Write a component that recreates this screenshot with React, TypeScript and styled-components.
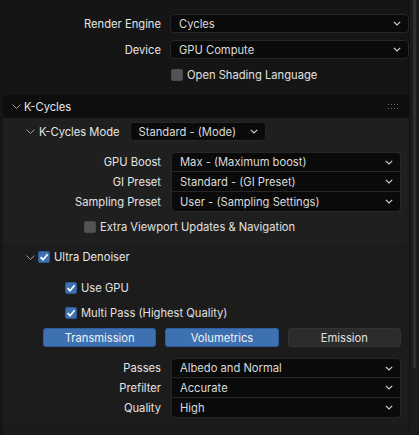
import React from 'react';
import styled, { createGlobalStyle } from 'styled-components';

const GlobalStyle = createGlobalStyle`
  html, body {
    margin: 0;
    padding: 0;
    background: #151515;
  }
  body {
    font-family: Inter, 'Noto Sans', 'DejaVu Sans', sans-serif;
    font-size: 11.2px;
    color: #e2e2e2;
  }
`;

type Pos = 'single' | 'first' | 'mid' | 'last';

const DropChevron = () => (
  <svg width='8' height='5' viewBox='0 0 8 5'>
    <path d='M0.8 0.8 L4 4 L7.2 0.8' fill='none' stroke='#cfcfcf' strokeWidth='1.2' />
  </svg>
);

const FoldChevron: React.FC<{ color?: string }> = ({ color = '#9c9c9c' }) => (
  <svg width='9' height='5' viewBox='0 0 9 5'>
    <path d='M0.5 0.5 L4.5 4.5 L8.5 0.5' fill='none' stroke={color} strokeWidth='1' />
  </svg>
);

const Tick = () => (
  <svg width='12' height='12' viewBox='0 0 12 12'>
    <path d='M2.6 6.2 L5 8.7 L9.6 3.2' fill='none' stroke='#fff' strokeWidth='1.7' />
  </svg>
);

const Grip = () => (
  <svg width='10' height='5' viewBox='0 0 10 5'>
    {[0, 3, 6, 9].map(x =>
      [0, 4].map(y => <rect key={`${x}-${y}`} x={x} y={y} width='1' height='1' fill='#6a6a6a' />)
    )}
  </svg>
);

const Select: React.FC<{ value: string; pos?: Pos }> = ({ value, pos = 'single' }) => (
  <SelectBox $pos={pos}>
    <span>{value}</span>
    <DropChevron />
  </SelectBox>
);

const Check: React.FC<{ on?: boolean; label: string; indent: number }> = ({ on, label, indent }) => (
  <CheckRow $indent={indent}>
    <CheckBox $on={!!on}>{on && <Tick />}</CheckBox>
    <span>{label}</span>
  </CheckRow>
);

const App: React.FC = () => {
  return (
    <React.Fragment>
      <GlobalStyle />
      <Frame>
        <Content>
          <TopSection>
            <PropRow $labelW={161} $gap={9}>
              <Label>Render Engine</Label>
              <Select value='Cycles' />
            </PropRow>
            <PropRow $labelW={161} $gap={9}>
              <Label>Device</Label>
              <Select value='GPU Compute' />
            </PropRow>
            <Check label='Open Shading Language' indent={171} />
          </TopSection>

          <Panel>
            <PanelHeader>
              <FoldChevron />
              <HeaderTitle>K-Cycles</HeaderTitle>
              <Grip />
            </PanelHeader>

            <PanelBody>
              <SubPanel>
                <SubHeader>
                  <FoldChevron />
                  <SubTitle>K-Cycles Mode</SubTitle>
                  <ModeSelect>
                    <Select value='Standard - (Mode)' />
                  </ModeSelect>
                </SubHeader>

                <Group>
                  <PropRow $labelW={158} $gap={10}>
                    <Label>GPU Boost</Label>
                    <Select value='Max - (Maximum boost)' pos='first' />
                  </PropRow>
                  <PropRow $labelW={158} $gap={10}>
                    <Label>GI Preset</Label>
                    <Select value='Standard - (GI Preset)' pos='mid' />
                  </PropRow>
                  <PropRow $labelW={158} $gap={10}>
                    <Label>Sampling Preset</Label>
                    <Select value='User - (Sampling Settings)' pos='last' />
                  </PropRow>
                </Group>

                <ViewportRow>
                  <Check label='Extra Viewport Updates & Navigation' indent={81} />
                </ViewportRow>
              </SubPanel>

              <SubHeader $tall>
                <FoldChevron />
                <CheckBox $on>
                  <Tick />
                </CheckBox>
                <SubTitle>Ultra Denoiser</SubTitle>
              </SubHeader>

              <DenoiseOptions>
                <Check on label='Use GPU' indent={62} />
                <Check on label='Multi Pass (Highest Quality)' indent={62} />
              </DenoiseOptions>

              <ButtonRow>
                <ToggleButton $on>Transmission</ToggleButton>
                <ToggleButton $on>Volumetrics</ToggleButton>
                <ToggleButton>Emission</ToggleButton>
              </ButtonRow>

              <Group $top={11}>
                <PropRow $labelW={158} $gap={10}>
                  <Label>Passes</Label>
                  <Select value='Albedo and Normal' pos='first' />
                </PropRow>
                <PropRow $labelW={158} $gap={10}>
                  <Label>Prefilter</Label>
                  <Select value='Accurate' pos='mid' />
                </PropRow>
                <PropRow $labelW={158} $gap={10}>
                  <Label>Quality</Label>
                  <Select value='High' pos='last' />
                </PropRow>
              </Group>

              <NextHeader>
                <FoldChevron color='#bdbdbd' />
              </NextHeader>
            </PanelBody>
          </Panel>
        </Content>

        <ScrollTrack>
          <ScrollThumb />
        </ScrollTrack>
      </Frame>
    </React.Fragment>
  );
};

export default App;

const Frame = styled.div`
  width: 419px;
  height: 435px;
  overflow: hidden;
  display: flex;
  background: #151515;
`;

const Content = styled.div`
  width: 409px;
  display: flex;
  flex-direction: column;
`;

const TopSection = styled.div`
  display: flex;
  flex-direction: column;
  gap: 7px;
  padding: 14px 0 12px 0;
`;

const PropRow = styled.div<{ $labelW: number; $gap: number }>`
  display: grid;
  grid-template-columns: ${p => p.$labelW}px 1fr;
  column-gap: ${p => p.$gap}px;
  align-items: center;
`;

const Label = styled.div`
  text-align: right;
  color: #e4e4e4;
  white-space: nowrap;
`;

const SelectBox = styled.div<{ $pos: Pos }>`
  height: ${p => (p.$pos === 'single' ? 19 : 20)}px;
  box-sizing: border-box;
  display: flex;
  align-items: center;
  justify-content: space-between;
  padding: 0 7px 0 8px;
  background: #0a0a0a;
  border: 1px solid #262626;
  border-top-width: ${p => (p.$pos === 'mid' || p.$pos === 'last' ? 0 : 1)}px;
  border-radius: ${p =>
    p.$pos === 'single' ? '4px' : p.$pos === 'first' ? '4px 4px 0 0' : p.$pos === 'last' ? '0 0 4px 4px' : '0'};
  color: #dadada;
  white-space: nowrap;

  svg {
    flex: none;
  }
`;

const CheckRow = styled.div<{ $indent: number }>`
  display: flex;
  align-items: center;
  gap: 4px;
  padding-left: ${p => p.$indent}px;
  height: 17px;
  color: #e0e0e0;
  white-space: nowrap;
`;

const CheckBox = styled.div<{ $on?: boolean }>`
  width: 12px;
  height: 12px;
  flex: none;
  border-radius: 3px;
  background: ${p => (p.$on ? '#3f71b2' : '#545454')};
  box-shadow: inset 0 0 0 1px ${p => (p.$on ? '#2c5a94' : '#4a4a4a')};
  display: flex;
  align-items: center;
  justify-content: center;
`;

const Panel = styled.div`
  margin-left: 3px;
  display: flex;
  flex-direction: column;
  background: #1c1c1c;
  border-radius: 4px 4px 0 0;
`;

const PanelHeader = styled.div`
  height: 23px;
  display: flex;
  align-items: center;
  padding: 0 11px 0 9px;
  background: #0e0e0e;
  border-radius: 4px 4px 0 0;
`;

const HeaderTitle = styled.div`
  flex: 1;
  margin-left: 3px;
  color: #e6e6e6;
`;

const PanelBody = styled.div`
  display: flex;
  flex-direction: column;
  padding-right: 8px;
`;

const SubPanel = styled.div`
  display: flex;
  flex-direction: column;
  background: #1f1f1f;
  margin-right: -6px;
  padding-right: 6px;
  padding-bottom: 4px;
`;

const SubHeader = styled.div<{ $tall?: boolean }>`
  height: ${p => (p.$tall ? 28 : 27)}px;
  display: flex;
  align-items: center;
  gap: 3px;
  padding-left: 23px;
`;

const SubTitle = styled.div`
  color: #e6e6e6;
  white-space: nowrap;
  margin-left: 1px;
`;

const ModeSelect = styled.div`
  width: 136px;
  margin-left: 7px;
`;

const Group = styled.div<{ $top?: number }>`
  display: flex;
  flex-direction: column;
  margin-top: ${p => p.$top ?? 7}px;
`;

const ViewportRow = styled.div`
  height: 24px;
  margin-top: 3px;
  display: flex;
  align-items: center;
`;

const DenoiseOptions = styled.div`
  display: flex;
  flex-direction: column;
  gap: 8px;
  padding-top: 8px;
`;

const ButtonRow = styled.div`
  display: grid;
  grid-template-columns: repeat(3, 1fr);
  gap: 9px;
  padding-left: 40px;
  margin-top: 7px;
`;

const ToggleButton = styled.div<{ $on?: boolean }>`
  height: 19px;
  display: flex;
  align-items: center;
  justify-content: center;
  border-radius: 4px;
  background: ${p => (p.$on ? '#3e71b2' : '#2c2c2c')};
  box-shadow: inset 0 0 0 1px ${p => (p.$on ? '#2f5e9c' : '#333333')};
  color: ${p => (p.$on ? '#f2f2f2' : '#e0e0e0')};
`;

const NextHeader = styled.div`
  height: 27px;
  margin-top: 6px;
  margin-right: -8px;
  display: flex;
  align-items: center;
  padding-left: 23px;
  background: #1a1a1a;
`;

const ScrollTrack = styled.div`
  width: 10px;
  display: flex;
  justify-content: center;
  background: #1b1b1b;
  border-left: 1px solid #121212;
  box-sizing: border-box;
`;

const ScrollThumb = styled.div`
  width: 3px;
  height: 368px;
  border-radius: 0 0 2px 2px;
  background: #2f2f2f;
`;
